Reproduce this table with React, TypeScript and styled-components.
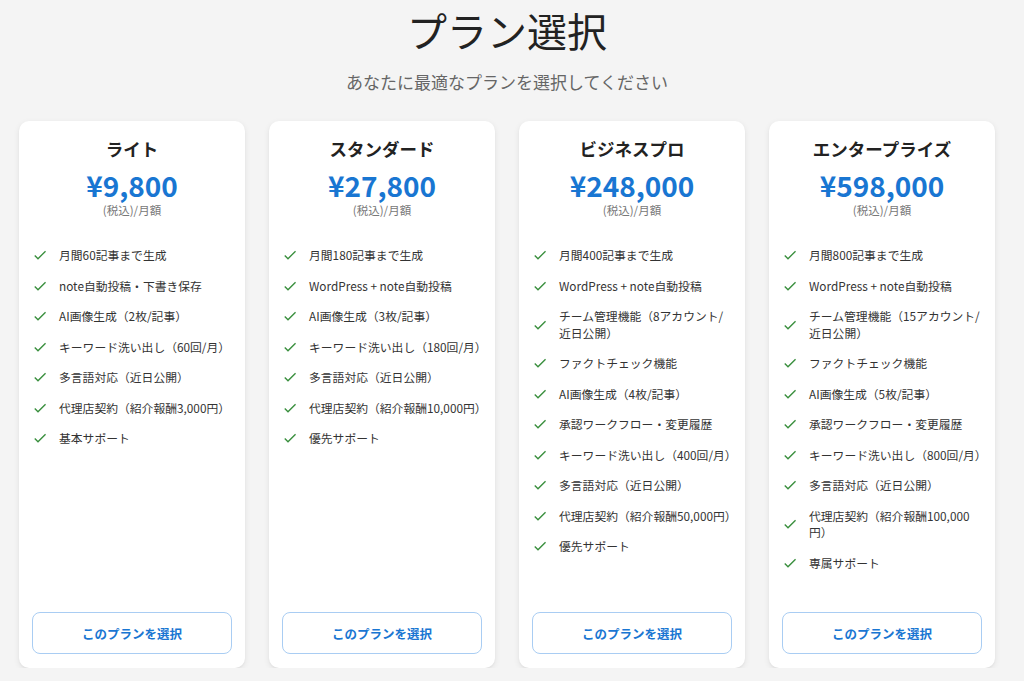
import React from "react";
import styled, { createGlobalStyle } from "styled-components";

const Global = createGlobalStyle`
  html, body { margin: 0; padding: 0; background: #f4f4f4; }
  body { font-family: "Noto Sans CJK JP", "Noto Sans", sans-serif; color: #222; }
  * { box-sizing: border-box; }
`;

const Page = styled.div`
  padding: 6px 29px 0 19px;
`;

const Header = styled.header`
  display: flex;
  flex-direction: column;
  align-items: center;
`;

const Title = styled.h1`
  margin: 0;
  font-size: 40px;
  line-height: 48px;
  font-weight: 400;
  color: #222;
`;

const Subtitle = styled.p`
  margin: 15px 0 0;
  font-size: 17px;
  line-height: 25px;
  color: #666;
`;

const Grid = styled.div`
  margin-top: 27px;
  display: grid;
  grid-template-columns: repeat(4, 1fr);
  gap: 24px;
`;

const Card = styled.div`
  background: #fff;
  border-radius: 10px;
  box-shadow: 0 2px 6px rgba(0, 0, 0, 0.08), 0 1px 2px rgba(0, 0, 0, 0.04);
  height: 547px;
  padding: 16px 13px 14px;
  display: flex;
  flex-direction: column;
`;

const PlanName = styled.h2`
  margin: 0;
  text-align: center;
  font-size: 17.5px;
  line-height: 24px;
  font-weight: 700;
  color: #222;
`;

const Price = styled.div`
  margin-top: 9px;
  text-align: center;
  font-size: 28px;
  line-height: 30px;
  font-weight: 700;
  color: #1976d2;
`;

const Tax = styled.div`
  margin-top: 2px;
  text-align: center;
  font-size: 11.5px;
  line-height: 16px;
  color: #777;
`;

const Features = styled.ul`
  list-style: none;
  margin: 22px 0 0;
  padding: 0;
`;

const Feature = styled.li`
  display: flex;
  align-items: center;
  gap: 11px;
  padding: 7px 0;
  font-size: 11.8px;
  line-height: 16.5px;
  color: #333;
`;

const CheckIcon = styled.svg`
  flex: none;
  width: 16px;
  height: 16px;
  fill: #388e3c;
`;

const SelectButton = styled.button`
  margin-top: auto;
  height: 42px;
  width: 100%;
  border: 1px solid #a9cdf3;
  border-radius: 8px;
  background: #fff;
  color: #1976d2;
  font-family: inherit;
  font-size: 12.5px;
  font-weight: 700;
  cursor: pointer;
`;

type Plan = { name: string; price: string; features: string[] };

const plans: Plan[] = [
  {
    name: "ライト",
    price: "¥9,800",
    features: [
      "月間60記事まで生成",
      "note自動投稿・下書き保存",
      "AI画像生成（2枚/記事）",
      "キーワード洗い出し（60回/月）",
      "多言語対応（近日公開）",
      "代理店契約（紹介報酬3,000円）",
      "基本サポート",
    ],
  },
  {
    name: "スタンダード",
    price: "¥27,800",
    features: [
      "月間180記事まで生成",
      "WordPress + note自動投稿",
      "AI画像生成（3枚/記事）",
      "キーワード洗い出し（180回/月）",
      "多言語対応（近日公開）",
      "代理店契約（紹介報酬10,000円）",
      "優先サポート",
    ],
  },
  {
    name: "ビジネスプロ",
    price: "¥248,000",
    features: [
      "月間400記事まで生成",
      "WordPress + note自動投稿",
      "チーム管理機能（8アカウント/近日公開）",
      "ファクトチェック機能",
      "AI画像生成（4枚/記事）",
      "承認ワークフロー・変更履歴",
      "キーワード洗い出し（400回/月）",
      "多言語対応（近日公開）",
      "代理店契約（紹介報酬50,000円）",
      "優先サポート",
    ],
  },
  {
    name: "エンタープライズ",
    price: "¥598,000",
    features: [
      "月間800記事まで生成",
      "WordPress + note自動投稿",
      "チーム管理機能（15アカウント/近日公開）",
      "ファクトチェック機能",
      "AI画像生成（5枚/記事）",
      "承認ワークフロー・変更履歴",
      "キーワード洗い出し（800回/月）",
      "多言語対応（近日公開）",
      "代理店契約（紹介報酬100,000円）",
      "専属サポート",
    ],
  },
];

const Check = () => (
  <CheckIcon viewBox="0 0 24 24" aria-hidden="true">
    <path d="M9 16.17 4.83 12l-1.42 1.41L9 19 21 7l-1.41-1.41z" />
  </CheckIcon>
);

export default function App() {
  return (
    <Page>
      <Global />
      <Header>
        <Title>プラン選択</Title>
        <Subtitle>あなたに最適なプランを選択してください</Subtitle>
      </Header>
      <Grid>
        {plans.map((p) => (
          <Card key={p.name}>
            <PlanName>{p.name}</PlanName>
            <Price>{p.price}</Price>
            <Tax>(税込)/月額</Tax>
            <Features>
              {p.features.map((f) => (
                <Feature key={f}>
                  <Check />
                  <span>{f}</span>
                </Feature>
              ))}
            </Features>
            <SelectButton>このプランを選択</SelectButton>
          </Card>
        ))}
      </Grid>
    </Page>
  );
}
